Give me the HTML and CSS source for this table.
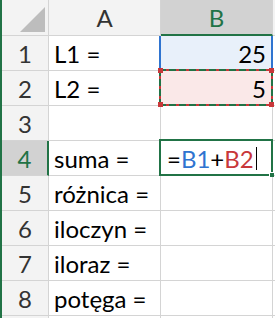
FILE: index.html
```html
<!DOCTYPE html>
<html lang="pl">
<head>
<meta charset="utf-8">
<link rel="stylesheet" href="styles.css">
</head>
<body>
<div class="sheet">
  <div class="corner"><div class="tri"></div></div>
  <div class="ch">A</div>
  <div class="ch ch-sel">B</div>
  <div class="ch"></div>

  <div class="rh">1</div>
  <div class="c">L1 =</div>
  <div class="c num ref-blue">25</div>
  <div class="c"></div>

  <div class="rh">2</div>
  <div class="c">L2 =</div>
  <div class="c num ref-red">5</div>
  <div class="c"></div>

  <div class="rh">3</div>
  <div class="c"></div>
  <div class="c"></div>
  <div class="c"></div>

  <div class="rh rh-sel">4</div>
  <div class="c">suma =</div>
  <div class="c active"><span>=</span><span class="f-blue">B1</span><span>+</span><span class="f-red">B2</span><span class="caret"></span></div>
  <div class="c"></div>

  <div class="rh">5</div>
  <div class="c">różnica =</div>
  <div class="c"></div>
  <div class="c"></div>

  <div class="rh">6</div>
  <div class="c">iloczyn =</div>
  <div class="c"></div>
  <div class="c"></div>

  <div class="rh">7</div>
  <div class="c">iloraz =</div>
  <div class="c"></div>
  <div class="c"></div>

  <div class="rh">8</div>
  <div class="c">potęga =</div>
  <div class="c"></div>
  <div class="c"></div>

  <div class="rh"></div>
  <div class="c"></div>
  <div class="c"></div>
  <div class="c"></div>
</div>
</body>
</html>
```

FILE: styles.css
```css
html, body {
  margin: 0;
  padding: 0;
  background: #ffffff;
}

.sheet {
  width: 275px;
  height: 318px;
  overflow: hidden;
  box-sizing: border-box;
  border-left: 2px solid #217346;
  display: grid;
  grid-template-columns: 47px 112px 112px 1fr;
  grid-template-rows: 36px repeat(9, 35px);
  font-family: Lato, "Open Sans", sans-serif;
  font-size: 24px;
  color: #000;
}

.sheet > div {
  box-sizing: border-box;
  border-right: 1px solid #d4d4d4;
  border-bottom: 1px solid #d4d4d4;
  min-width: 0;
  white-space: nowrap;
}

.corner {
  background: #f3f3f3;
  display: flex;
  justify-content: flex-end;
  align-items: flex-end;
  padding: 0 3px 3px 0;
}

.tri {
  width: 25px;
  height: 25px;
  background: #bdbdbd;
  clip-path: polygon(100% 0, 100% 100%, 0 100%);
}

.ch {
  background: #f3f3f3;
  color: #333;
  display: flex;
  justify-content: center;
  align-items: center;
  line-height: 1;
  padding-top: 1px;
}

.ch-sel {
  background: #d2d2d2;
  color: #217346;
  border-bottom: 2px solid #217346 !important;
}

.rh {
  background: #f3f3f3;
  color: #333;
  display: flex;
  justify-content: center;
  align-items: center;
  line-height: 1;
  padding-top: 1px;
}

.rh-sel {
  background: #d2d2d2;
  color: #217346;
  border-right: 2px solid #217346 !important;
}

.c {
  display: flex;
  align-items: center;
  padding: 1px 5px 0 5px;
  line-height: 1;
}

.num {
  justify-content: flex-end;
  padding-right: 6px;
}

.ref-blue {
  background: #e8f0fa;
  position: relative;
}

.ref-blue::before {
  content: "";
  position: absolute;
  top: 0;
  bottom: -1px;
  left: -2px;
  right: -1px;
  border-left: 2px solid #2f74d0;
  border-right: 2px solid #2f74d0;
}

.ref-red {
  background: #fae8e8;
  position: relative;
  z-index: 1;
}

.ref-red::before {
  content: "";
  position: absolute;
  top: -2px;
  bottom: -1px;
  left: -2px;
  right: -1px;
  background:
    repeating-linear-gradient(90deg, #217346 0 7px, #c8373a 7px 10px) top left / 100% 2px no-repeat,
    repeating-linear-gradient(90deg, #217346 0 7px, #c8373a 7px 10px) bottom left / 100% 2px no-repeat,
    repeating-linear-gradient(180deg, #217346 0 7px, #c8373a 7px 10px) top left / 2px 100% no-repeat,
    repeating-linear-gradient(180deg, #217346 0 7px, #c8373a 7px 10px) top right / 2px 100% no-repeat;
}

.ref-red::after {
  content: "";
  position: absolute;
  top: -3px;
  bottom: -2px;
  left: -3px;
  right: -2px;
  background:
    linear-gradient(#c8373a, #c8373a) top left / 5px 5px no-repeat,
    linear-gradient(#c8373a, #c8373a) top right / 5px 5px no-repeat,
    linear-gradient(#c8373a, #c8373a) bottom left / 5px 5px no-repeat,
    linear-gradient(#c8373a, #c8373a) bottom right / 5px 5px no-repeat;
}

.active {
  position: relative;
  z-index: 2;
  padding-left: 6px;
}

.active::before {
  content: "";
  position: absolute;
  top: -2px;
  bottom: -1px;
  left: -2px;
  right: -1px;
  border: 2px solid #217346;
}

.active::after {
  content: "";
  position: absolute;
  right: -2px;
  bottom: -2px;
  width: 4px;
  height: 4px;
  background: #217346;
  border-left: 1px solid #fff;
  border-top: 1px solid #fff;
}

.f-blue { color: #2f74d0; }
.f-red { color: #c8373a; }

.caret {
  display: inline-block;
  width: 1px;
  height: 23px;
  background: #000;
  margin-left: 2px;
}
```
